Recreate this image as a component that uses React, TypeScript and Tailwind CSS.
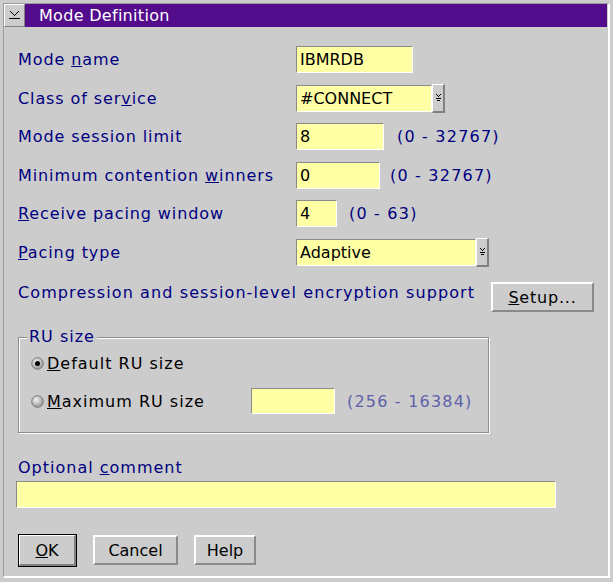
import type { ReactNode } from 'react'

function Field({ w, value, className = '' }: { w: string; value?: string; className?: string }) {
  return (
    <div
      className={`${w} h-[27px] bg-[#ffffa4] border-t border-l border-[#8a8a8a] border-r border-b border-r-white border-b-white flex items-center pl-[3px] text-black tracking-normal ${className}`}
    >
      {value}
    </div>
  )
}

function DropArrow() {
  return (
    <div className="w-[13px] h-[29px] -my-[1px] bg-[#cccccc] border-t border-l border-white border-r-2 border-b-2 border-r-[#808080] border-b-[#808080] flex items-center justify-center">
      <svg width="5" height="8" viewBox="0 0 5 8" shapeRendering="crispEdges">
        <path d="M0 0h1v1H0zM4 0h1v1H4zM1 1h1v1H1zM3 1h1v1H3zM2 2h1v1H2zM0 4h5v1H0zM1 6h3v1H1z" fill="#000" />
      </svg>
    </div>
  )
}

function Row({ label, children }: { label: ReactNode; children: ReactNode }) {
  return (
    <div className="flex items-center h-[27px]">
      <div className="w-[278px] text-[#000080] tracking-[0.9px]">{label}</div>
      {children}
    </div>
  )
}

function Range({ text, ml }: { text: string; ml: string }) {
  return <span className={`${ml} text-[#000080] tracking-[1.2px]`}>{text}</span>
}

function Radio({ checked }: { checked?: boolean }) {
  const id = checked ? 'rg1' : 'rg2'
  return (
    <svg width="13" height="13" viewBox="0 0 13 13">
      <defs>
        <radialGradient id={id} cx="0.4" cy="0.35" r="0.7">
          <stop offset="0" stopColor="#f4f4f4" />
          <stop offset="1" stopColor="#8c8c8c" />
        </radialGradient>
      </defs>
      <circle cx="6.5" cy="6.5" r="5.8" fill={`url(#${id})`} stroke="#7a7a7a" strokeWidth="1" />
      {checked && <circle cx="6.5" cy="6.5" r="2.5" fill="#000" />}
    </svg>
  )
}

function Button({ children, w, isDefault }: { children: ReactNode; w: string; isDefault?: boolean }) {
  if (isDefault) {
    return (
      <div className={`${w} h-[33px] border border-black`}>
        <div className="h-full bg-[#cccccc] border-t border-l border-white border-r-2 border-b-2 border-r-[#808080] border-b-[#808080] flex items-center justify-center text-black">
          {children}
        </div>
      </div>
    )
  }
  return (
    <div
      className={`${w} h-[30px] bg-[#cccccc] border-t-2 border-l-2 border-white border-r-2 border-b-2 border-r-[#8a8a8a] border-b-[#8a8a8a] flex items-center justify-center text-black`}
    >
      {children}
    </div>
  )
}

export default function App() {
  return (
    <div className="w-[613px] h-[582px] bg-[#cccccc] overflow-hidden font-['DejaVu_Sans',sans-serif] text-[16px] leading-[19px]">
      <div className="ml-[3px] mt-[3px] w-[607px] h-[575px] border-l border-t border-[#9a9a9a] border-r-2 border-b-2 border-r-white border-b-white">
        {/* title bar */}
        <div className="flex h-[23px]">
          <div className="w-[21px] h-[23px] bg-[#cccccc] border-t border-l border-white border-r border-b border-r-[#808080] border-b-[#808080] flex items-center justify-center">
            <svg width="11" height="9" viewBox="0 0 11 9" shapeRendering="crispEdges">
              <path d="M1 0h1v1H1zM9 0h1v1H9zM2 1h1v1H2zM8 1h1v1H8zM3 2h1v1H3zM7 2h1v1H7zM4 3h1v1H4zM6 3h1v1H6zM5 4h1v1H5zM0 7h11v1H0z" fill="#000" />
            </svg>
          </div>
          <div className="flex-1 bg-[#520c8c] mr-[1px] flex items-center pl-[14px] text-white tracking-[0.3px]">
            Mode Definition
          </div>
        </div>

        <div className="pl-[14px]">
          <div className="mt-[19px] flex flex-col gap-[11.5px]">
            <Row label={<>Mode <u>n</u>ame</>}>
              <Field w="w-[117px]" value="IBMRDB" />
            </Row>
            <Row label={<>Class of ser<u>v</u>ice</>}>
              <Field w="w-[136px]" value="#CONNECT" />
              <DropArrow />
            </Row>
            <Row label="Mode session limit">
              <Field w="w-[88px]" value="8" />
              <Range text="(0 - 32767)" ml="ml-[13px]" />
            </Row>
            <Row label={<>Minimum contention <u>w</u>inners</>}>
              <Field w="w-[84px]" value="0" />
              <Range text="(0 - 32767)" ml="ml-[10px]" />
            </Row>
            <Row label={<><u>R</u>eceive pacing window</>}>
              <Field w="w-[41px]" value="4" />
              <Range text="(0 - 63)" ml="ml-[12px]" />
            </Row>
            <Row label={<><u>P</u>acing type</>}>
              <Field w="w-[180px]" value="Adaptive" />
              <DropArrow />
            </Row>
          </div>

          <div className="mt-[16.5px] w-[576px] flex items-center justify-between">
            <span className="text-[#000080] tracking-[1.1px] -mt-[10px]">Compression and session-level encryption support</span>
            <Button w="w-[103px]">
              <span className="tracking-[0.8px]"><u>S</u>etup...</span>
            </Button>
          </div>

          <div className="relative mt-[25px] w-[471px] h-[96px] border border-[#8c8c8c] shadow-[inset_1px_1px_0_#ffffff,1px_1px_0_#ffffff] pt-[15px] pl-[12px]">
            <span className="absolute -top-[11px] left-[8px] px-[2px] bg-[#cccccc] text-[#000080] tracking-[1px]">RU size</span>
            <div className="flex items-center h-[20px] text-black tracking-[1px]">
              <Radio checked />
              <span className="ml-[3px]"><u>D</u>efault RU size</span>
            </div>
            <div className="flex items-center h-[26px] mt-[15px] text-black">
              <Radio />
              <span className="ml-[3px] w-[204px] tracking-[1px]"><u>M</u>aximum RU size</span>
              <div className="w-[84px] h-[26px] bg-[#ffffa4] border-t border-l border-[#8a8a8a] border-r border-b border-r-white border-b-white" />
              <span className="ml-[12px] text-[#6060aa] tracking-[1.2px]">(256 - 16384)</span>
            </div>
          </div>

          <div className="mt-[25px] h-[19px] text-[#000080] tracking-[1px]">
            Optional <u>c</u>omment
          </div>
          <div className="mt-[4px] -ml-[2px] w-[540px] h-[27px] bg-[#ffffa4] border-t border-l border-[#8a8a8a] border-r border-b border-r-white border-b-white" />

          <div className="mt-[26px] flex items-start">
            <Button w="w-[59px]" isDefault>
              <span><u>O</u>K</span>
            </Button>
            <div className="ml-[16px] mt-[1px]">
              <Button w="w-[85px]">Cancel</Button>
            </div>
            <div className="ml-[16px] mt-[1px]">
              <Button w="w-[62px]">Help</Button>
            </div>
          </div>
        </div>
      </div>
    </div>
  )
}
